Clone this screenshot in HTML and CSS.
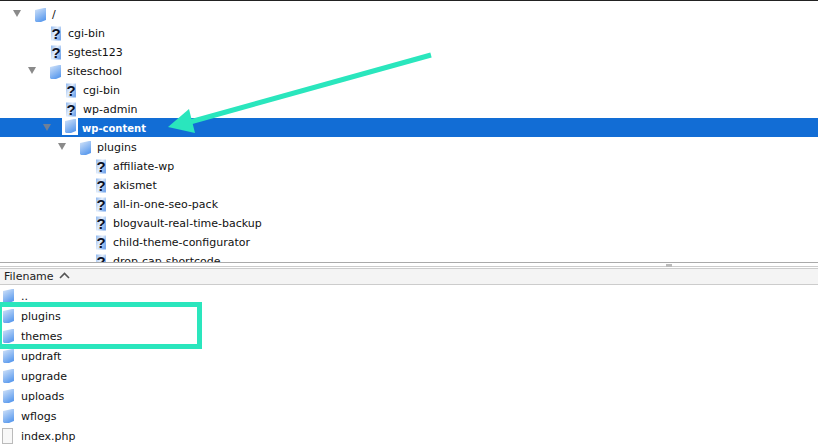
FILE: index.html
```html
<!DOCTYPE html>
<html lang="en">
  <head>
    <meta charset="UTF-8" />
    <title>FTP file browser</title>
    <link rel="stylesheet" href="styles.css">
  </head>
  <body>
    <svg class="defs" width="0" height="0">
      <defs>
        <linearGradient id="blue" x1="0" y1="0" x2="0.5" y2="1">
          <stop offset="0" stop-color="#d4e4f9" />
          <stop offset="1" stop-color="#5f9dee" />
        </linearGradient>
        <linearGradient id="page" x1="0" y1="0" x2="1" y2="0.6">
          <stop offset="0" stop-color="#8db6ee" />
          <stop offset="0.5" stop-color="#e4eefb" />
          <stop offset="1" stop-color="#7aa9ec" />
        </linearGradient>
        <symbol id="folder" viewBox="0 0 14 16">
          <path d="M2 3 L11 1 L13 1 L13 13 L8 15 L3 15 L2 14 Z" fill="url(#blue)" />
        </symbol>
        <symbol id="unknown" viewBox="0 0 14 16">
          <path d="M2 0.5 L12 0.5 L12 14.5 L2 14.5 Z" fill="url(#page)" />
          <text x="7" y="12.5" class="qmark">?</text>
        </symbol>
      </defs>
    </svg>

    <div class="tree">
      <div class="row depth0"><span class="arrow"></span><svg class="icon"><use href="#folder" /></svg><span class="name">/</span></div>
      <div class="row depth1"><span class="leaf"></span><svg class="icon"><use href="#unknown" /></svg><span class="name">cgi-bin</span></div>
      <div class="row depth1"><span class="leaf"></span><svg class="icon"><use href="#unknown" /></svg><span class="name">sgtest123</span></div>
      <div class="row depth1"><span class="arrow"></span><svg class="icon"><use href="#folder" /></svg><span class="name">siteschool</span></div>
      <div class="row depth2"><span class="leaf"></span><svg class="icon"><use href="#unknown" /></svg><span class="name">cgi-bin</span></div>
      <div class="row depth2"><span class="leaf"></span><svg class="icon"><use href="#unknown" /></svg><span class="name">wp-admin</span></div>
      <div class="row depth2 selected"><span class="arrow"></span><svg class="icon"><use href="#folder" /></svg><span class="name">wp-content</span></div>
      <div class="row depth3"><span class="arrow"></span><svg class="icon"><use href="#folder" /></svg><span class="name">plugins</span></div>
      <div class="row depth4"><span class="leaf"></span><svg class="icon"><use href="#unknown" /></svg><span class="name">affiliate-wp</span></div>
      <div class="row depth4"><span class="leaf"></span><svg class="icon"><use href="#unknown" /></svg><span class="name">akismet</span></div>
      <div class="row depth4"><span class="leaf"></span><svg class="icon"><use href="#unknown" /></svg><span class="name">all-in-one-seo-pack</span></div>
      <div class="row depth4"><span class="leaf"></span><svg class="icon"><use href="#unknown" /></svg><span class="name">blogvault-real-time-backup</span></div>
      <div class="row depth4"><span class="leaf"></span><svg class="icon"><use href="#unknown" /></svg><span class="name">child-theme-configurator</span></div>
      <div class="row depth4"><span class="leaf"></span><svg class="icon"><use href="#unknown" /></svg><span class="name">drop-cap-shortcode</span></div>
    </div>

    <div class="splitter"><span class="grip"></span></div>

    <div class="list-header">Filename <svg class="sort" width="11" height="7" viewBox="0 0 11 7"><path d="M1 6 L5.5 1.5 L10 6" fill="none" stroke="#555" stroke-width="1.6" /></svg></div>

    <div class="list">
      <div class="file"><svg class="icon"><use href="#folder" /></svg><span class="name">..</span></div>
      <div class="file"><svg class="icon"><use href="#folder" /></svg><span class="name">plugins</span></div>
      <div class="file"><svg class="icon"><use href="#folder" /></svg><span class="name">themes</span></div>
      <div class="file"><svg class="icon"><use href="#folder" /></svg><span class="name">updraft</span></div>
      <div class="file"><svg class="icon"><use href="#folder" /></svg><span class="name">upgrade</span></div>
      <div class="file"><svg class="icon"><use href="#folder" /></svg><span class="name">uploads</span></div>
      <div class="file"><svg class="icon"><use href="#folder" /></svg><span class="name">wflogs</span></div>
      <div class="file"><span class="doc"></span><span class="name">index.php</span></div>
    </div>

    <!-- annotations drawn on top of the screenshot -->
    <svg class="pointer" width="818" height="447" viewBox="0 0 818 447">
      <path d="M431 55 L190 122" stroke="#2ae6bd" stroke-width="5" fill="none" />
      <path d="M168 127 L189 109 L195 133 Z" fill="#2ae6bd" />
    </svg>
    <div class="callout"></div>
  </body>
</html>
```

FILE: styles.css
```css
html,
body {
  height: 100%;
}
body {
  position: relative;
  margin: 0;
  width: 818px;
  height: 447px;
  overflow: hidden;
  background-color: white;
  color: #111;
  font-family: "DejaVu Sans", sans-serif;
  font-size: 11px;
}
.defs {
  position: absolute;
}
.qmark {
  font-family: "Liberation Sans", sans-serif;
  font-size: 15px;
  font-weight: bold;
  text-anchor: middle;
  fill: #0b1024;
}
.tree {
  height: 258px;
  padding-top: 3px;
  overflow: hidden;
  border-top: 1px solid #222;
}
.row {
  display: flex;
  align-items: center;
  height: 19px;
}
.row .name {
  padding-top: 2px;
}
.depth0 {
  padding-left: 13px;
}
.depth1 {
  padding-left: 28px;
}
.depth2 {
  padding-left: 43px;
}
.depth3 {
  padding-left: 58px;
}
.depth4 {
  padding-left: 73px;
}
.arrow {
  width: 0;
  height: 0;
  margin-right: 13px;
  border-left: 4.5px solid transparent;
  border-right: 4.5px solid transparent;
  border-top: 7px solid #8a8a8a;
}
.leaf {
  width: 9px;
  margin-right: 13px;
}
.icon {
  flex: none;
  width: 14px;
  height: 16px;
  margin-left: -1px;
  margin-right: 5px;
  margin-top: 2px;
}
.selected {
  background-color: #126dd5;
  color: white;
}
.selected .name {
  font-size: 10px;
  font-weight: bold;
}
.selected .arrow {
  border-top-color: #6f8098;
}
.selected .icon {
  align-self: flex-start;
  margin: 0 4px 0 -2px;
  padding: 0 1px 1px;
  background-color: white;
}
.splitter {
  position: relative;
  height: 3px;
  margin-bottom: 1px;
  border-top: 1px solid #aaa;
  border-bottom: 1px solid #ccc;
}
.grip {
  position: absolute;
  left: 666px;
  top: 1px;
  width: 6px;
  height: 3px;
  background-color: #bbb;
}
.list-header {
  display: flex;
  align-items: center;
  gap: 5px;
  height: 15px;
  padding-left: 4px;
  background-color: #f4f4f4;
  border-top: 1px solid #ccc;
  border-bottom: 1px solid #ccc;
  color: #222;
}
.sort {
  margin-bottom: 2px;
}
.list {
  padding-top: 1px;
}
.file {
  display: flex;
  align-items: center;
  height: 20px;
  padding-left: 2px;
}
.file .icon {
  margin-top: 0;
}
.doc {
  flex: none;
  width: 9px;
  height: 14px;
  margin-right: 7px;
  background-color: #f8f8f8;
  border: 1px solid #bbb;
}
.file .name {
  margin-left: 1px;
}
.pointer {
  position: absolute;
  left: 0;
  top: 0;
}
.callout {
  position: absolute;
  left: -3px;
  top: 302px;
  width: 195px;
  height: 37px;
  border: 5px solid #2ae6bd;
}
```
